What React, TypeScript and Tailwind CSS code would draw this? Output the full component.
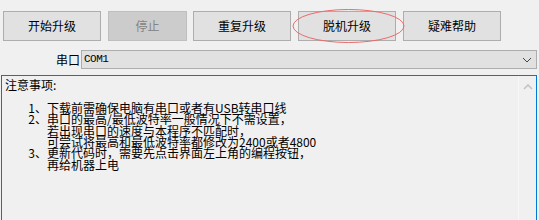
import React from "react";

const font = "font-['Microsoft_YaHei','Noto_Sans_CJK_SC',sans-serif]";

function Btn({ label, w, disabled }: { label: string; w: string; disabled?: boolean }) {
  return (
    <div
      className={`${w} h-[30px] flex items-center justify-center border text-[12px] ${
        disabled
          ? "bg-[#cccccc] border-[#bfbfbf] text-[#838383]"
          : "bg-[#e1e1e1] border-[#adadad] text-[#000000]"
      }`}
    >
      {label}
    </div>
  );
}

export default function App() {
  return (
    <div className={`relative w-[539px] h-[220px] bg-[#f0f0f0] overflow-hidden ${font}`}>
      <div className="flex pt-[11px] pl-[3px] gap-[7px]">
        <Btn label="开始升级" w="w-[98px]" />
        <Btn label="停止" w="w-[79px]" disabled />
        <div className="-ml-px">
          <Btn label="重复升级" w="w-[98px]" />
        </div>
        <Btn label="脱机升级" w="w-[98px]" />
        <Btn label="疑难帮助" w="w-[98px]" />
      </div>

      <div className="flex items-center mt-[9px]">
        <div className="w-[81px] text-right pr-[1px] text-[12px] leading-[19px] text-black">串口</div>
        <div className="w-[456px] h-[19px] bg-[#e1e1e1] border border-[#adadad] flex items-center justify-between pl-[2px] pr-[4px]">
          <span className="font-['Liberation_Mono',monospace] text-[11px] text-black leading-none tracking-[-0.5px]">COM1</span>
          <svg width="10" height="6" viewBox="0 0 10 6">
            <path d="M1 1 L5 5 L9 1" fill="none" stroke="#444" strokeWidth="1" />
          </svg>
        </div>
      </div>

      <div className="ml-[1px] mt-[6px] w-[536px] h-[160px] border border-[#0078d7] bg-[#f0f0f0] flex">
        <div className="flex-1 pl-[3px] pt-[3px] text-[12px] leading-[11.4px] text-black font-['Noto_Sans_CJK_SC',sans-serif]">
          <div>注意事项:</div>
          <div className="h-[11.4px]"></div>
          <div className="flex">
            <span className="w-[42px] text-right pr-0">1、</span>
            <span>下载前需确保电脑有串口或者有USB转串口线</span>
          </div>
          <div className="flex">
            <span className="w-[42px] text-right">2、</span>
            <span>串口的最高/最低波特率一般情况下不需设置，</span>
          </div>
          <div className="pl-[42px]">若出现串口的速度与本程序不匹配时，</div>
          <div className="pl-[42px]">可尝试将最高和最低波特率都修改为2400或者4800</div>
          <div className="flex">
            <span className="w-[42px] text-right">3、</span>
            <span>更新代码时，需要先点击界面左上角的编程按钮，</span>
          </div>
          <div className="pl-[42px]">再给机器上电</div>
        </div>
        <div className="w-[18px] border-l border-[#f7f7f7] bg-[#f0f0f0] flex justify-center pt-[8px]">
          <svg width="10" height="6" viewBox="0 0 10 6">
            <path d="M1 5 L5 1 L9 5" fill="none" stroke="#c2c2c2" strokeWidth="1.5" />
          </svg>
        </div>
      </div>

      <svg className="absolute left-0 top-0 pointer-events-none" width="539" height="60">
        <ellipse cx="348.5" cy="26" rx="55.5" ry="16.5" fill="none" stroke="#ec6a6a" strokeWidth="1" />
      </svg>
    </div>
  );
}
